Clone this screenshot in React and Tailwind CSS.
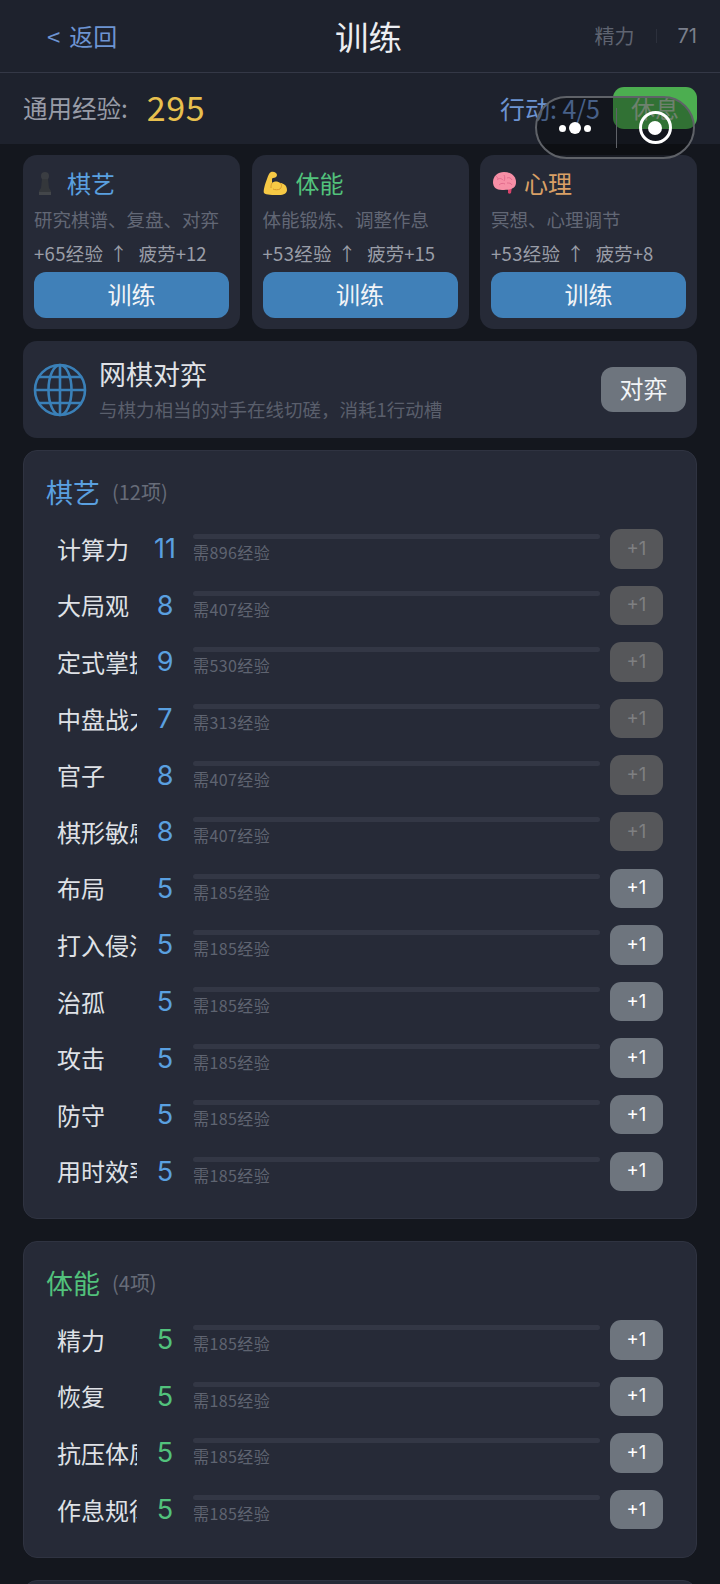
const FONT = "font-['Noto_Sans_CJK_SC','Noto_Sans',sans-serif]";

const chessSkills = [
  { name: "计算力", level: 11, need: 896, off: true },
  { name: "大局观", level: 8, need: 407, off: true },
  { name: "定式掌握", level: 9, need: 530, off: true },
  { name: "中盘战力", level: 7, need: 313, off: true },
  { name: "官子", level: 8, need: 407, off: true },
  { name: "棋形敏感", level: 8, need: 407, off: true },
  { name: "布局", level: 5, need: 185 },
  { name: "打入侵消", level: 5, need: 185 },
  { name: "治孤", level: 5, need: 185 },
  { name: "攻击", level: 5, need: 185 },
  { name: "防守", level: 5, need: 185 },
  { name: "用时效率", level: 5, need: 185 },
];

const bodySkills = [
  { name: "精力", level: 5, need: 185 },
  { name: "恢复", level: 5, need: 185 },
  { name: "抗压体质", level: 5, need: 185 },
  { name: "作息规律", level: 5, need: 185 },
];

function PawnIcon() {
  return (
    <svg width="16" height="25" viewBox="0 0 16 25">
      <circle cx="8" cy="5" r="4" fill="#3a3d42" />
      <path d="M5 8h6l1 9 2 3v4H2v-4l2-3z" fill="#34373b" />
      <path d="M2 21h12v3H2z" fill="#43464a" />
    </svg>
  );
}

function MuscleIcon() {
  return (
    <svg width="25" height="25" viewBox="0 0 25 25">
      <path d="M8 1c3-1 6 1 6 3 0 2-2 3-4 3-1 0-1 1-1 2l0 3c2-2 6-2 8 0 3 0 7 2 7 7 0 3-3 5-8 5-6 0-13 0-15-2-1-2 1-9 3-14 1-3 2-6 4-7z" fill="#f6c945" />
      <path d="M9 12c-1 2-1 3-1 5M17 12c2 1 2 4 0 6-2 1-5 1-7 0" stroke="#d8992a" strokeWidth="1" fill="none" />
    </svg>
  );
}

function BrainIcon() {
  return (
    <svg width="25" height="24" viewBox="0 0 25 24">
      <path d="M16 17l4-1-1 6c-1 1-2 1-3 0z" fill="#d9436b" />
      <path d="M1 11C1 5 6 1 12 1c7 0 12 4 12 10 0 4-2 6-5 7-3 1-6 1-9 1-6 0-9-3-9-8z" fill="#f78fa6" />
      <path d="M5 9c2-2 4-2 6 0M12 4c1 2 1 4 0 6M7 14c2-2 4-2 6-1M15 7c2-1 4 0 5 2M15 12c2 0 4 0 5 2M4 5c1 1 2 2 2 3" stroke="#e0688a" strokeWidth="0.9" fill="none" />
    </svg>
  );
}

function GlobeIcon() {
  return (
    <svg width="54" height="54" viewBox="0 0 54 54" fill="none" stroke="#3a80b8" strokeWidth="2.6">
      <circle cx="27" cy="27" r="25" />
      <ellipse cx="27" cy="27" rx="11.5" ry="25" />
      <path d="M27 2v50M2 27h50M6 14h42M6 40h42" />
    </svg>
  );
}

function TrainCard({ icon, iconPad, title, color, desc, gain, tired }) {
  return (
    <div className="flex-1 h-[174px] rounded-[14px] bg-[#262a37] px-[11px] pt-[13px]">
      <div className="flex items-center h-[30px]">
        <div className={`w-[33px] flex items-center ${iconPad}`}>{icon}</div>
        <span className={`text-[24px] leading-[30px] ${color}`}>{title}</span>
      </div>
      <div className="mt-[9px] text-[18.5px] leading-[24px] text-[#626775] whitespace-nowrap">{desc}</div>
      <div className="mt-[10px] flex text-[18.5px] leading-[24px] text-[#9a9ea8] whitespace-nowrap">
        <span className="tracking-[0.3px]">{gain}</span>
        <span className="ml-[6px] mr-[11px]">↑</span>
        <span>{tired}</span>
      </div>
      <button className="mt-[7px] w-full h-[46px] rounded-[12px] bg-[#4080b8] pb-[3px] text-[24px] text-[#f2f4f7]">训练</button>
    </div>
  );
}

function SkillRow({ skill, color }) {
  return (
    <div className="flex items-center h-[39.5px] pl-[11px]">
      <div className="w-[80px] overflow-hidden whitespace-nowrap text-[24px] text-[#dfe1e6]">{skill.name}</div>
      <div className={`w-[56px] text-center font-['Inter'] text-[27px] leading-none ${color}`}>{skill.level}</div>
      <div className="flex-1">
        <div className="h-[5px] rounded-full bg-[#333745]" />
        <div className="mt-[2px] text-[16px] leading-[22px] tracking-[0.4px] text-[#5f6471]">需{skill.need}经验</div>
      </div>
      {skill.off ? (
        <button className="ml-[10px] w-[53px] h-[39.5px] rounded-[11px] bg-[#56575a] font-['Inter'] text-[18.5px] text-[#7f8082]">+1</button>
      ) : (
        <button className="ml-[10px] w-[53px] h-[39.5px] rounded-[11px] bg-[#6e757e] font-['Inter'] text-[18.5px] text-white">+1</button>
      )}
    </div>
  );
}

function SkillCard({ title, count, color, skills, className }) {
  return (
    <section className={`rounded-[14px] border border-[#2f3341] bg-[#262a37] pl-[22px] pr-[33px] ${className}`}>
      <div className="flex items-center h-[40px] mt-[21px]">
        <span className={`text-[27px] ${color}`}>{title}</span>
        <span className="ml-[12px] text-[20px] text-[#676c79]">({count}项)</span>
      </div>
      <div className="mt-[17px] flex flex-col gap-[17.1px]">
        {skills.map((s) => (
          <SkillRow key={s.name} skill={s} color={color} />
        ))}
      </div>
    </section>
  );
}

export default function App() {
  return (
    <div className={`relative h-[1584px] w-[720px] overflow-hidden bg-[#14171e] ${FONT}`}>
      {/* top bar */}
      <header className="flex h-[72px] items-center justify-between bg-[#1e222d] pl-[47px] pr-[23px]">
        <div className="w-[193px] text-[24px] text-[#6d94d2]">
          <span className="mr-[9px]">&lt;</span>返回
        </div>
        <div className="text-[33.5px] text-[#eceef2]">训练</div>
        <div className="flex w-[200px] items-center justify-end text-[20px] text-[#5f6471]">
          <span>精力</span>
          <span className="mx-[21px] h-[14px] w-px bg-[#2c303c]" />
          <span className="font-['Inter'] text-[#7a7f8b]">71</span>
        </div>
      </header>
      <div className="flex h-[72px] items-center justify-between border-t border-[#343846] bg-[#1e222d] pl-[23px] pr-[23px]">
        <div className="flex items-center">
          <span className="text-[24.5px] text-[#989ca7]">通用经验:</span>
          <span className="ml-[19px] -mt-[3px] text-[34px] leading-none tracking-[0.6px] text-[#e8c04e]">295</span>
        </div>
        <div className="flex items-center">
          <span className="text-[25px] text-[#6d94d2]">行动: 4/5</span>
          <button className="ml-[13px] -mt-[1px] w-[84px] h-[42px] rounded-[11px] bg-[#4cae50] text-[24px] text-[#a9c7a9]">休息</button>
        </div>
      </div>

      <main className="flex flex-col px-[23px] pt-[11px]">
        <div className="flex gap-[11.5px]">
          <TrainCard icon={<PawnIcon />} iconPad="pl-[3px]" title="棋艺" color="text-[#5aa0e0]" desc="研究棋谱、复盘、对弈" gain="+65经验" tired="疲劳+12" />
          <TrainCard icon={<MuscleIcon />} iconPad="pl-0" title="体能" color="text-[#52c27c]" desc="体能锻炼、调整作息" gain="+53经验" tired="疲劳+15" />
          <TrainCard icon={<BrainIcon />} iconPad="pl-[1px]" title="心理" color="text-[#d9a066]" desc="冥想、心理调节" gain="+53经验" tired="疲劳+8" />
        </div>

        <div className="mt-[12px] flex h-[97px] items-center rounded-[14px] bg-[#262a37] pl-[10px] pr-[11px]">
          <GlobeIcon />
          <div className="ml-[12px] mb-[3px] flex-1">
            <div className="text-[27px] leading-[36px] text-[#dfe1e6]">网棋对弈</div>
            <div className="mt-[5px] text-[18.5px] leading-[24px] text-[#5a5f6c]">与棋力相当的对手在线切磋，消耗1行动槽</div>
          </div>
          <button className="w-[85px] h-[45px] rounded-[12px] bg-[#6e757e] pb-[3px] text-[24px] text-[#f2f4f7]">对弈</button>
        </div>

        <SkillCard className="mt-[12px] h-[769px]" title="棋艺" count={12} color="text-[#5aa0e0]" skills={chessSkills} />
        <SkillCard className="mt-[22px] h-[317px]" title="体能" count={4} color="text-[#52c27c]" skills={bodySkills} />
        <div className="mt-[22px] h-[60px] rounded-[14px] border border-[#2f3341] bg-[#262a37]" />
      </main>

      {/* wechat capsule */}
      <div className="absolute left-[535px] top-[96px] flex h-[63px] w-[160px] items-center rounded-full border-2 border-[#5f6268] bg-black/35">
        <div className="flex w-[75px] mr-[4px] mt-[1px] items-center justify-center gap-[3px]">
          <span className="h-[7px] w-[7px] rounded-full bg-white" />
          <span className="h-[12px] w-[12px] rounded-full bg-white" />
          <span className="h-[7px] w-[7px] rounded-full bg-white" />
        </div>
        <div className="h-[40px] w-px bg-[#5f6268]" />
        <div className="flex flex-1 items-center justify-center">
          <div className="flex h-[33px] w-[33px] items-center justify-center rounded-full border-[3.5px] border-white">
            <div className="h-[14px] w-[14px] rounded-full bg-white" />
          </div>
        </div>
      </div>
    </div>
  );
}
